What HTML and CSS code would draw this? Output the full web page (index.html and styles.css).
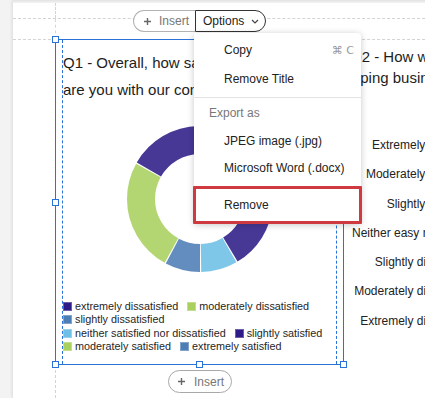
FILE: index.html
```html
<!DOCTYPE html>
<html>
<head>
  <meta charset="utf-8">
  <title>Report editor</title>
  <link rel="stylesheet" href="styles.css">
</head>
<body>
  <div class="canvas">
    <div class="topbar"></div>

    <div class="guide-row first"><span class="gutter"></span></div>
    <div class="guide-row second"><span class="gutter"></span></div>

    <div class="pill top-pill">
      <button class="pill-insert">
        <svg width="7" height="7" viewBox="0 0 7 7"><path d="M3.5 0v7M0 3.5h7" stroke="#666" stroke-width="1.4"/></svg>
        Insert
      </button>
      <button class="pill-options">
        Options
        <svg width="8" height="5" viewBox="0 0 8 5"><path d="M1 1l3 3 3-3" fill="none" stroke="#444" stroke-width="1.2"/></svg>
      </button>
    </div>

    <div class="main">
      <div class="spacer"></div>

      <div class="card">
        <span class="handle tl"></span>
        <span class="handle ml"></span>
        <span class="handle bl"></span>
        <span class="handle bc"></span>
        <span class="handle br"></span>
        <div class="card-inner">
          <p class="title">Q1 - Overall, how satisfied or dissatisfied<br>are you with our company?</p>

          <svg class="donut" width="146" height="146" viewBox="0 0 146 146">
            <g transform="rotate(-90 73 73)" fill="none" stroke-width="28" stroke-opacity="0.88">
              <circle cx="73" cy="73" r="59" pathLength="360" stroke="#4d7db5" stroke-dasharray="39 321" stroke-dashoffset="0"/>
              <circle cx="73" cy="73" r="59" pathLength="360" stroke="#a9d05e" stroke-dasharray="54 306" stroke-dashoffset="-40"/>
              <circle cx="73" cy="73" r="59" pathLength="360" stroke="#2d1c87" stroke-dasharray="54 306" stroke-dashoffset="-95"/>
              <circle cx="73" cy="73" r="59" pathLength="360" stroke="#6dbfe5" stroke-dasharray="29 331" stroke-dashoffset="-150"/>
              <circle cx="73" cy="73" r="59" pathLength="360" stroke="#4d7db5" stroke-dasharray="28 332" stroke-dashoffset="-180"/>
              <circle cx="73" cy="73" r="59" pathLength="360" stroke="#a9d05e" stroke-dasharray="90 270" stroke-dashoffset="-209"/>
              <circle cx="73" cy="73" r="59" pathLength="360" stroke="#2d1c87" stroke-dasharray="59 301" stroke-dashoffset="-300"/>
            </g>
          </svg>

          <ul class="legend">
            <li><span class="swatch purple"></span>extremely dissatisfied</li>
            <li><span class="swatch green"></span>moderately dissatisfied</li>
            <li><span class="swatch blue"></span>slightly dissatisfied</li>
            <li><span class="swatch sky"></span>neither satisfied nor dissatisfied</li>
            <li><span class="swatch purple"></span>slightly satisfied</li>
            <li><span class="swatch green"></span>moderately satisfied</li>
            <li><span class="swatch blue"></span>extremely satisfied</li>
          </ul>
        </div>
      </div>

      <div class="q2">
        <p class="q2-title">Q2 - How would you rate the ease of<br>developing business with us?</p>
        <ul class="scale">
          <li>Extremely easy</li>
          <li>Moderately easy</li>
          <li>Slightly easy</li>
          <li>Neither easy nor difficult</li>
          <li>Slightly difficult</li>
          <li>Moderately difficult</li>
          <li>Extremely difficult</li>
        </ul>
      </div>
    </div>

    <div class="bottom">
      <span class="gutter"></span>
      <div class="bottom-center">
        <button class="pill single">
          <svg width="7" height="7" viewBox="0 0 7 7"><path d="M3.5 0v7M0 3.5h7" stroke="#666" stroke-width="1.4"/></svg>
          Insert
        </button>
      </div>
    </div>

    <div class="menu">
      <div class="menu-item">Copy <span class="shortcut">&#8984; C</span></div>
      <div class="menu-item">Remove Title</div>
      <div class="menu-sep"></div>
      <div class="menu-head">Export as</div>
      <div class="menu-item sub">JPEG image (.jpg)</div>
      <div class="menu-item sub">Microsoft Word (.docx)</div>
      <div class="menu-item remove">Remove</div>
    </div>
  </div>
</body>
</html>
```

FILE: styles.css
```css
html, body {
  margin: 0;
  height: 398px;
  overflow: hidden;
}

body {
  background: #f3f3f3;
  font-family: "Liberation Sans", Arial, sans-serif;
  color: #222;
}

.canvas {
  position: relative;
  margin-left: 13px;
  height: 398px;
  background: #fff;
  box-shadow: -1px 0 3px rgba(0, 0, 0, 0.1);
}

.topbar {
  height: 3px;
  background: linear-gradient(#e2e2e2, #f4f4f4);
}

/* grid guides */
.guide-row {
  display: flex;
  border-bottom: 1px dashed #d4d4d4;
}

.guide-row.first {
  height: 15px;
}

.guide-row.second {
  height: 20px;
}

.gutter {
  display: block;
  width: 42px;
  flex: none;
  border-right: 1px dashed #d4d4d4;
}

/* insert / options pills */
.pill {
  display: flex;
  font-family: "Liberation Sans", Arial, sans-serif;
  font-size: 12px;
}

.pill button,
.pill.single {
  display: flex;
  align-items: center;
  background: #fff;
  font: inherit;
  font-size: 12px;
  padding: 0;
  margin: 0;
  box-sizing: border-box;
  cursor: pointer;
}

.top-pill {
  position: absolute;
  left: 120px;
  top: 10px;
  height: 22px;
  z-index: 2;
}

.pill-insert {
  width: 62px;
  height: 22px;
  gap: 8px;
  padding-left: 10px !important;
  color: #777;
  border: 1px solid #b3b3b3;
  border-right: none;
  border-radius: 11px 0 0 11px;
}

.pill-options {
  width: 71px;
  height: 22px;
  gap: 7px;
  padding-left: 7px !important;
  color: #222;
  border: 1px solid #333;
  border-radius: 0 11px 11px 0;
}

.pill.single {
  width: 64px;
  height: 23px;
  gap: 9px;
  padding-left: 9px;
  color: #777;
  border: 1px solid #a8a8a8;
  border-radius: 12px;
}

/* main row */
.main {
  display: flex;
  height: 326px;
  margin-top: -1px;
}

.spacer {
  width: 42px;
  flex: none;
}

.card {
  position: relative;
  flex: none;
  width: 289px;
  height: 326px;
  box-sizing: border-box;
  border: 1px solid #2b72d8;
  padding: 0 6px;
}

.card-inner {
  height: 100%;
  box-sizing: border-box;
  border-left: 1px dashed #2b72d8;
  border-right: 1px dashed #2b72d8;
}

.handle {
  position: absolute;
  width: 7px;
  height: 7px;
  box-sizing: border-box;
  background: #fff;
  border: 1px solid #2b72d8;
}

.handle.tl { left: -4px; top: -4px; }
.handle.ml { left: -4px; top: calc(50% - 3px); }
.handle.bl { left: -4px; bottom: -4px; }
.handle.bc { left: calc(50% - 4px); bottom: -4px; }
.handle.br { right: -4px; bottom: -4px; }

.title {
  margin: 0;
  padding: 9px 0 0 0;
  font-size: 15px;
  line-height: 27px;
  white-space: nowrap;
  color: #1d1d1d;
}

.donut {
  display: block;
  margin: 23px auto 0;
}

.legend {
  list-style: none;
  display: flex;
  flex-wrap: wrap;
  column-gap: 9px;
  width: 268px;
  margin: 27.5px 0 0 0;
  padding: 0;
  font-size: 10.8px;
  line-height: 13.5px;
  color: #1f1f1f;
}

.legend li {
  display: flex;
  align-items: center;
  gap: 3px;
  white-space: nowrap;
}

.swatch {
  width: 9px;
  height: 9px;
  box-sizing: border-box;
  border: 1px solid rgba(255, 255, 255, 0.3);
}

.swatch.purple { background: #2d1c87; }
.swatch.green { background: #a9d05e; }
.swatch.blue { background: #4d7db5; }
.swatch.sky { background: #6dbfe5; }

/* second question */
.q2 {
  flex: none;
  padding: 7px 0 0 6px;
}

.q2-title {
  margin: 0 0 0 -34px;
  text-indent: 34px;
  font-size: 15px;
  line-height: 21px;
  white-space: nowrap;
  color: #1d1d1d;
}

.scale {
  list-style: none;
  width: 102px;
  margin: 43px 0 0 2px;
  padding: 0;
  font-size: 12px;
}

.scale li {
  height: 29.3px;
  line-height: 29.3px;
  text-align: right;
  white-space: nowrap;
  overflow: hidden;
}

/* bottom row */
.bottom {
  display: flex;
  height: 33px;
}

.bottom .gutter {
  height: 100%;
}

.bottom-center {
  width: 288px;
  display: flex;
  justify-content: center;
  align-items: flex-start;
  padding-top: 5px;
  box-sizing: border-box;
}

/* dropdown */
.menu {
  position: absolute;
  left: 181px;
  top: 33px;
  width: 167px;
  padding-top: 3px;
  background: #fff;
  border-radius: 0 4px 4px 4px;
  box-shadow: 0 1px 7px rgba(0, 0, 0, 0.22);
  font-size: 12px;
  z-index: 3;
}

.menu-item {
  display: flex;
  justify-content: space-between;
  height: 29px;
  line-height: 29px;
  padding: 0 7px 0 30px;
  color: #222;
}

.menu-item.sub {
  height: 27px;
  line-height: 27px;
}

.shortcut {
  color: #999;
  font-family: "DejaVu Sans", sans-serif;
  font-size: 11px;
}

.menu-sep {
  height: 1px;
  margin-top: 3px;
  background: #e3e3e3;
}

.menu-head {
  height: 30px;
  line-height: 30px;
  padding-left: 15px;
  color: #777;
}

.menu-item.remove {
  height: 32px;
  line-height: 32px;
  margin: 4px -1px 0;
  padding-left: 28px;
  border: 3px solid #cf3a41;
  border-radius: 1px;
}
```
